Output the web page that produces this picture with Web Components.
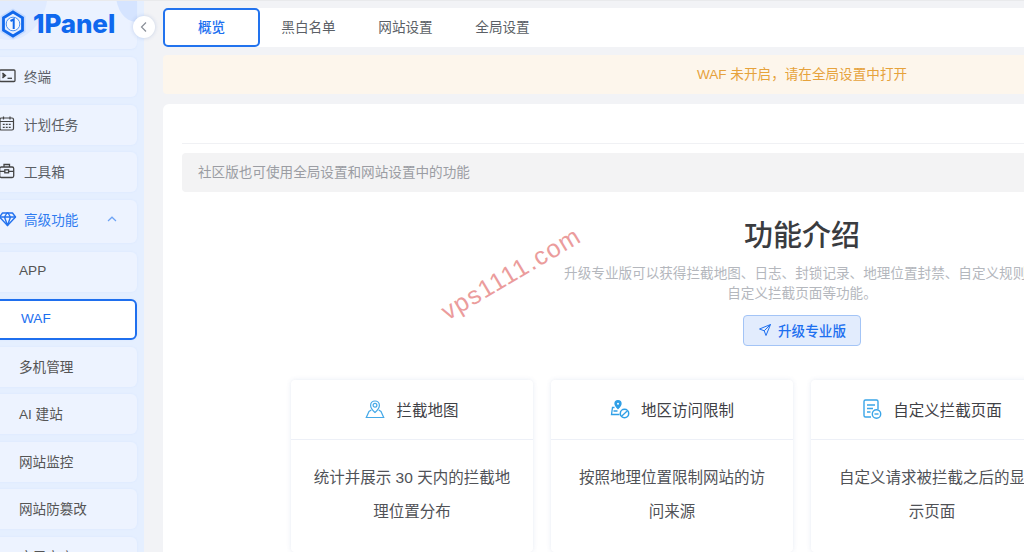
<!DOCTYPE html>
<html lang="zh">
<head>
<meta charset="utf-8">
<title>1Panel WAF</title>
<style>
    html, body { margin: 0; height: 552px; overflow: hidden; }
    body {
        font-family: "Liberation Sans", "Noto Sans CJK SC", sans-serif;
        font-size: 13.6px;
        background: #f2f3f6;
        position: relative;
    }
    /* thin strip along the top edge of the window */
    body::before {
        content: '';
        position: absolute;
        left: 0;
        right: 0;
        top: 0;
        height: 1px;
        background: #e9eaec;
        z-index: 4;
    }
    app-shell svg { display: block; }
</style>
</head>
<body>
<app-shell>
    <side-bar slot="side">
        <nav-item>
            <svg slot="icon" width="18" height="18" viewBox="0 0 18 18" fill="none" stroke="#444" stroke-width="1.3"><rect x=".5" y="3" width="15.500" height="11.500" rx="1"/><path d="M3.500 6 6.500 8.500l-3 2.500" fill="#444"/><path d="M8.500 11.300h4.500"/></svg>
            终端
        </nav-item>
        <nav-item>
            <svg slot="icon" width="18" height="18" viewBox="0 0 18 18" fill="none" stroke="#444" stroke-width="1.2"><rect x="1" y="3" width="13.500" height="12" rx="1.500"/><path d="M4.500 1.500v3M11 1.500v3M1 6.500h13.500M3.800 9.300h1.900M6.800 9.300h1.900M9.800 9.300h1.900M3.800 12.300h1.900M6.800 12.300h1.900M9.800 12.300h1.900"/></svg>
            计划任务
        </nav-item>
        <nav-item>
            <svg slot="icon" width="18" height="18" viewBox="0 0 18 18" fill="none" stroke="#444" stroke-width="1.300"><rect x=".7" y="5" width="14" height="10.500" rx="1.500"/><path d="M5 5V2.500h5.500V5M.7 9.300h14"/><rect x="5.800" y="7.800" width="3.800" height="3" fill="#eaf1ff"/></svg>
            工具箱
        </nav-item>
        <nav-item group active>
            <svg slot="icon" width="18" height="18" viewBox="0 0 18 18" fill="none" stroke="#2472ee" stroke-width="1.400" stroke-linejoin="round"><path d="M3.500 3h10l3 4-8 8.500L.5 7z"/><path d="M.5 7h16M5.500 7l3 8.500L11.500 7 9 3H8z"/></svg>
            高级功能
            <svg slot="tail" width="12" height="12" viewBox="0 0 12 12" fill="none" stroke="#6da3f5" stroke-width="1.200"><path d="M2 8 6 4.200 10 8"/></svg>
        </nav-item>
        <nav-item sub>APP</nav-item>
        <nav-item sub selected>WAF</nav-item>
        <nav-item sub>多机管理</nav-item>
        <nav-item sub>AI 建站</nav-item>
        <nav-item sub>网站监控</nav-item>
        <nav-item sub>网站防篡改</nav-item>
        <nav-item sub>应用商店</nav-item>
    </side-bar>

    <tab-bar>
        <tab-item active>概览</tab-item>
        <tab-item>黑白名单</tab-item>
        <tab-item>网站设置</tab-item>
        <tab-item>全局设置</tab-item>
    </tab-bar>

    <alert-bar>WAF 未开启，请在全局设置中打开</alert-bar>

    <intro-panel>
        <span slot="notice">社区版也可使用全局设置和网站设置中的功能</span>
        <span slot="title">功能介绍</span>
        <span slot="desc">升级专业版可以获得拦截地图、日志、封锁记录、地理位置封禁、自定义规则、<br>自定义拦截页面等功能。</span>
        <span slot="action">升级专业版</span>

        <feature-card>
            <svg slot="icon" width="20" height="20" viewBox="0 0 20 20" fill="none" stroke="#45a9e8" stroke-width="1.200"><path d="M10 13.500C7.200 10.800 5.600 8.800 5.600 6.400a4.400 4.400 0 0 1 8.800 0c0 2.400-1.600 4.400-4.400 7.100z"/><circle cx="10" cy="6.300" r="1.900"/><path d="M6.300 11 4 12.500 1.300 18.500h17.400L16 12.500 13.700 11"/></svg>
            <span slot="title">拦截地图</span>
            统计并展示 30 天内的拦截地理位置分布
        </feature-card>
        <feature-card>
            <svg slot="icon" width="20" height="20" viewBox="0 0 20 20" fill="none" stroke="#2f9fe6" stroke-width="1.300"><path d="M8 9.500C6 7.500 5 6.200 5 4.700a3 3 0 0 1 6 0c0 1.500-1 2.800-3 4.800z" fill="#2f9fe6"/><circle cx="8" cy="4.700" r="1" fill="#fff" stroke="none"/><path d="M4.500 8.500H2.500L1.500 15.500H9.500M3.500 12h4"/><circle cx="14.500" cy="14.500" r="4.200" fill="#fff" stroke-width="1.500"/><path d="M11.600 17.200l5.800-5.400"/></svg>
            <span slot="title">地区访问限制</span>
            按照地理位置限制网站的访问来源
        </feature-card>
        <feature-card>
            <svg slot="icon" width="20" height="20" viewBox="0 0 20 20" fill="none" stroke="#3aa5e8" stroke-width="1.400"><path d="M9 18H3.500A1.500 1.500 0 0 1 2 16.500v-14A1.500 1.500 0 0 1 3.500 1h11A1.500 1.500 0 0 1 16 2.500V10"/><path d="M5 6h8M5 9.500h6M5 13h3.500"/><circle cx="14.500" cy="15" r="4.200" fill="#fff"/><path d="M12.500 15h4"/></svg>
            <span slot="title">自定义拦截页面</span>
            自定义请求被拦截之后的显示页面
        </feature-card>
    </intro-panel>
</app-shell>
<water-mark>vps1111.com</water-mark>

<script>
class AppShell extends HTMLElement {
    constructor() {
        super();
        this.attachShadow({ mode: 'open' });
        this.shadowRoot.innerHTML = `
            <style>
                :host { display: flex; width: 1441px; height: 552px; box-sizing: border-box; }
                .side { flex: 0 0 144px; position: relative; }
                main {
                    flex: 0 0 1278px;
                    margin-left: 19px;
                    padding-top: 8px;
                    display: flex;
                    flex-direction: column;
                    gap: 8px;
                }
                .collapse {
                    position: absolute;
                    top: 16px;
                    left: 133px;
                    width: 22px;
                    height: 22px;
                    border-radius: 50%;
                    background: #fff;
                    box-shadow: 0 0 4px rgba(0, 60, 160, .18);
                    display: flex;
                    align-items: center;
                    justify-content: center;
                    z-index: 2;
                }
            </style>
            <div class="side">
                <slot name="side"></slot>
                <div class="collapse">
                    <svg width="10" height="12" viewBox="0 0 10 12" fill="none" stroke="#8a8f98" stroke-width="1.200"><path d="M7 1.500 2.500 6 7 10.500"/></svg>
                </div>
            </div>
            <main><slot></slot></main>
        `;
    }
}

class SideBar extends HTMLElement {
    constructor() {
        super();
        this.attachShadow({ mode: 'open' });
        this.shadowRoot.innerHTML = `
            <style>
                :host {
                    display: block;
                    width: 144px;
                    height: 552px;
                    background: #e5efff;
                    overflow: hidden;
                    position: relative;
                }
                .head {
                    height: 49px;
                    margin-left: -20px;
                    margin-right: 7px;
                    border-radius: 0 0 6px 6px;
                    background: #ebf2ff;
                    box-shadow: 0 1px 2px rgba(0, 94, 235, .04);
                    position: relative;
                    overflow: hidden;
                }
                .blob { position: absolute; border-radius: 50%; background: #e0ebff; }
                .blob.a { left: -10px; top: -60px; width: 78px; height: 100px; }
                .blob.b { left: 136px; top: -34px; width: 40px; height: 56px; background: #d5e4ff; }
                .logo {
                    position: absolute;
                    left: 20px;
                    top: 8px;
                    display: flex;
                    align-items: center;
                    gap: 7px;
                    height: 32px;
                }
                .word {
                    font-family: Inter, "Liberation Sans", sans-serif;
                    font-weight: 800;
                    font-size: 26px;
                    letter-spacing: -.1px;
                    color: #0f68ee;
                    line-height: 32px;
                }
                .list {
                    margin: 8px 7px 0 -20px;
                    display: flex;
                    flex-direction: column;
                    gap: 7.500px;
                }
            </style>
            <div class="head">
                <div class="blob a"></div>
                <div class="blob b"></div>
                <div class="logo">
                    <svg width="26" height="32" viewBox="0 0 26 32" fill="none" style="display:block">
                        <path d="M13 .5 25.500 8v16L13 31.500.5 24V8z" fill="#c4daff"/>
                        <path d="M13 4 22.500 9.700v12.600L13 28 3.500 22.300V9.700z" fill="#e6efff" stroke="#1068ec" stroke-width="2.800"/>
                        <circle cx="13" cy="16" r="6.800" fill="#f2f7ff" stroke="#4a90f2" stroke-width="1"/>
                        <path d="M10.500 13 13.700 11.300V21" stroke="#1068ec" stroke-width="2"/>
                    </svg>
                    <span class="word">1Panel</span>
                </div>
            </div>
            <div class="list"><slot></slot></div>
        `;
    }
}

class NavItem extends HTMLElement {
    constructor() {
        super();
        this.attachShadow({ mode: 'open' });
        this.shadowRoot.innerHTML = `
            <style>
                :host {
                    display: flex;
                    align-items: center;
                    box-sizing: border-box;
                    height: 40px;
                    padding: 0 0 2px 19px;
                    border-radius: 6px;
                    background: #edf3ff;
                    box-shadow: 0 0 3px rgba(0, 94, 235, .05);
                    color: #5b5f66;
                    font-size: 13.600px;
                }
                :host([group]) { height: 43px; margin-bottom: 1.500px; padding-bottom: 4px; }
                :host([active]) { color: #2f7bf0; }
                :host([sub]) { padding-left: 39px; color: #555; }
                :host([selected]) {
                    padding-left: 39px;
                    height: 41px;
                    margin: -.5px 0 -.5px;
                    background: #fff;
                    color: #1c6ff0;
                    border: 2px solid #1f6fee;
                    font-weight: 500;
                }
                .icon { width: 18px; margin-right: 7px; display: flex; }
                :host([sub]) .icon { display: none; }
                .tail { margin-left: 28px; display: flex; }
            </style>
            <span class="icon"><slot name="icon"></slot></span>
            <slot></slot>
            <span class="tail"><slot name="tail"></slot></span>
        `;
    }
}

class TabBar extends HTMLElement {
    constructor() {
        super();
        this.attachShadow({ mode: 'open' });
        this.shadowRoot.innerHTML = `
            <style>
                :host {
                    display: flex;
                    flex: none;
                    height: 39px;
                    background: #fff;
                    border-radius: 6px;
                }
            </style>
            <slot></slot>
        `;
    }
}

class TabItem extends HTMLElement {
    constructor() {
        super();
        this.attachShadow({ mode: 'open' });
        this.shadowRoot.innerHTML = `
            <style>
                :host {
                    display: flex;
                    align-items: center;
                    justify-content: center;
                    box-sizing: border-box;
                    width: 97px;
                    padding-bottom: 4px;
                    color: #5b5f66;
                    font-size: 13.600px;
                    border-radius: 4px;
                }
                :host([active]) {
                    border: 2px solid #2273ee;
                    border-radius: 5px;
                    color: #1c6ff0;
                    font-weight: 500;
                }
            </style>
            <slot></slot>
        `;
    }
}

class AlertBar extends HTMLElement {
    constructor() {
        super();
        this.attachShadow({ mode: 'open' });
        this.shadowRoot.innerHTML = `
            <style>
                :host {
                    display: flex;
                    flex: none;
                    align-items: center;
                    justify-content: center;
                    box-sizing: border-box;
                    height: 39px;
                    padding-bottom: 4px;
                    border-radius: 4px;
                    background: #fdf6ec;
                    color: #e6a23c;
                    font-size: 13.600px;
                }
            </style>
            <slot></slot>
        `;
    }
}

class IntroPanel extends HTMLElement {
    constructor() {
        super();
        this.attachShadow({ mode: 'open' });
        this.shadowRoot.innerHTML = `
            <style>
                :host {
                    display: block;
                    flex: none;
                    margin-top: 2px;
                    padding: 0 19px;
                    height: 460px;
                    background: #fff;
                    border-radius: 6px;
                    box-sizing: border-box;
                }
                .rule { height: 39px; border-bottom: 1px solid #f0f1f4; }
                .notice {
                    margin-top: 9px;
                    height: 39px;
                    box-sizing: border-box;
                    padding: 0 0 4px 16px;
                    display: flex;
                    align-items: center;
                    background: #f3f3f4;
                    border-radius: 4px;
                    color: #9b9da3;
                }
                .intro { display: flex; flex-direction: column; align-items: center; text-align: center; }
                .title { margin-top: 25px; font-size: 29px; line-height: 38px; color: #3a3c40; font-weight: 500; }
                .desc { margin-top: 9px; font-size: 13.600px; line-height: 20px; color: #b4b7bd; white-space: nowrap; }
                .btn {
                    margin-top: 11px;
                    box-sizing: border-box;
                    width: 118px;
                    height: 31px;
                    padding-bottom: 1px;
                    display: flex;
                    align-items: center;
                    justify-content: center;
                    gap: 6px;
                    background: #e2ecfd;
                    border: 1px solid #a3c4f6;
                    border-radius: 4px;
                    color: #1c6ff0;
                    font-weight: 500;
                }
                .grid {
                    margin-top: 34px;
                    display: grid;
                    grid-template-columns: repeat(4, 242px);
                    gap: 18px;
                    justify-content: center;
                }
            </style>
            <div class="rule"></div>
            <div class="notice"><slot name="notice"></slot></div>
            <div class="intro">
                <div class="title"><slot name="title"></slot></div>
                <div class="desc"><slot name="desc"></slot></div>
                <div class="btn">
                    <svg width="14" height="14" viewBox="0 0 14 14" fill="none" stroke="#1c6ff0" stroke-width="1" stroke-linejoin="round" style="display:block"><path d="M12.500 1.500 1.500 6l4.700 1.800L8 12.500z"/><path d="M6.200 7.800 12.500 1.500"/></svg>
                    <slot name="action"></slot>
                </div>
            </div>
            <div class="grid"><slot></slot></div>
        `;
    }
}

class FeatureCard extends HTMLElement {
    constructor() {
        super();
        this.attachShadow({ mode: 'open' });
        this.shadowRoot.innerHTML = `
            <style>
                :host {
                    display: block;
                    height: 172px;
                    background: #fff;
                    border-radius: 4px;
                    box-shadow: 0 0 5px rgba(60, 90, 160, .12);
                }
                header {
                    box-sizing: border-box;
                    height: 60px;
                    padding-bottom: 2px;
                    display: flex;
                    align-items: center;
                    justify-content: center;
                    gap: 11px;
                    border-bottom: 1px solid #edf0f7;
                    font-size: 15.500px;
                    color: #3f4146;
                }
                .body {
                    padding: 21px 22px 0;
                    font-size: 15.500px;
                    line-height: 34px;
                    text-align: center;
                    color: #505257;
                }
            </style>
            <header><slot name="icon"></slot><slot name="title"></slot></header>
            <div class="body"><slot></slot></div>
        `;
    }
}

class WaterMark extends HTMLElement {
    constructor() {
        super();
        this.attachShadow({ mode: 'open' });
        this.shadowRoot.innerHTML = `
            <style>
                :host {
                    position: absolute;
                    left: 432px;
                    top: 258px;
                    font-family: "Liberation Sans", sans-serif;
                    font-size: 25px;
                    letter-spacing: 1.300px;
                    line-height: 30px;
                    color: #eb9c9c;
                    white-space: nowrap;
                    transform: rotate(-30.500deg);
                    pointer-events: none;
                    z-index: 3;
                }
            </style>
            <slot></slot>
        `;
    }
}

customElements.define('app-shell', AppShell);
customElements.define('side-bar', SideBar);
customElements.define('nav-item', NavItem);
customElements.define('tab-bar', TabBar);
customElements.define('tab-item', TabItem);
customElements.define('alert-bar', AlertBar);
customElements.define('intro-panel', IntroPanel);
customElements.define('feature-card', FeatureCard);
customElements.define('water-mark', WaterMark);
</script>
</body>
</html>
